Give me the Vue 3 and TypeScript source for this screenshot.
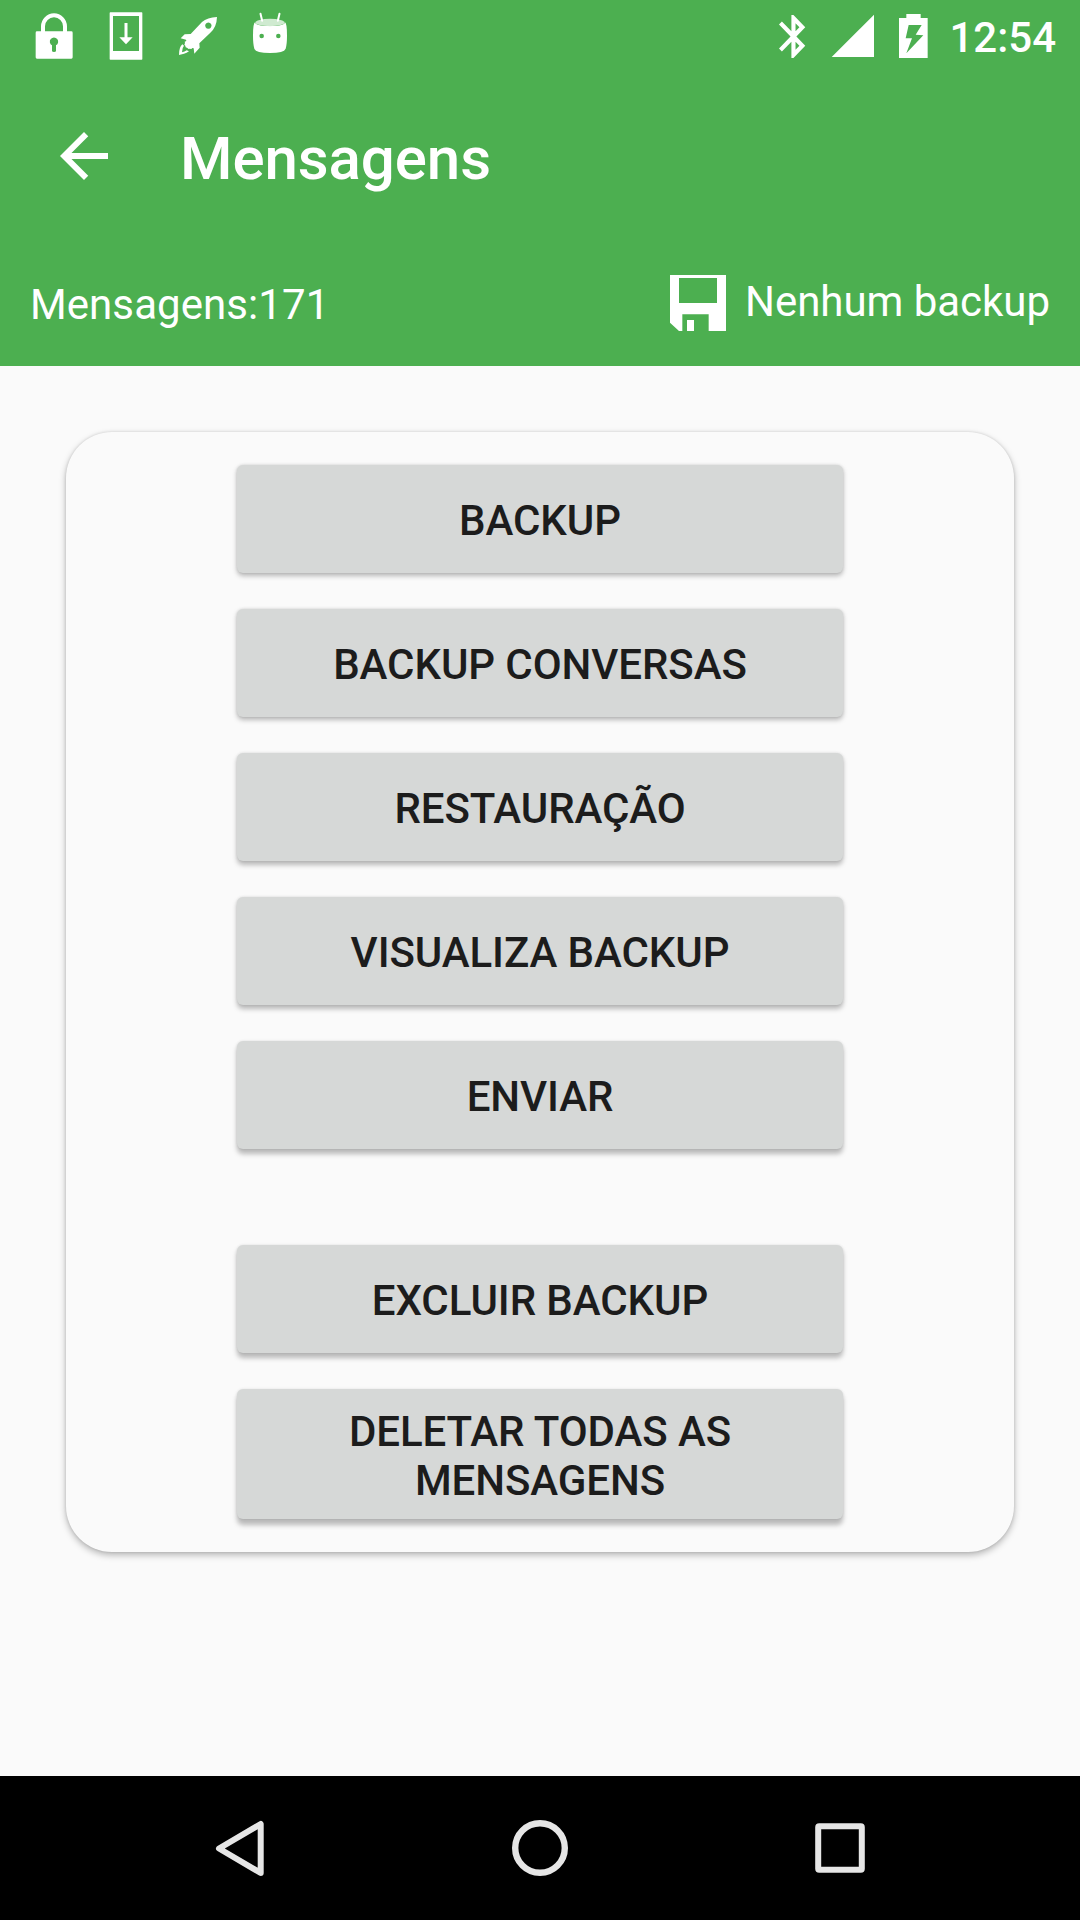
<script setup lang="ts">
interface Action {
  label: string
  tall?: boolean
  spaced?: boolean
}

const total = 171
const actions: Action[] = [
  { label: 'BACKUP' },
  { label: 'BACKUP CONVERSAS' },
  { label: 'RESTAURAÇÃO' },
  { label: 'VISUALIZA BACKUP' },
  { label: 'ENVIAR' },
  { label: 'EXCLUIR BACKUP', spaced: true },
  { label: 'DELETAR TODAS AS MENSAGENS', tall: true },
]

const shadowOffset = (index: number): string => `${2.5 + index * 0.45}px`
</script>

<template>
  <div class="screen">
    <header class="header">
      <div class="status">
        <div class="notifications">
          <svg width="38" height="72" viewBox="105 0 114 216">
            <path d="M129 98V79a33 33 0 0 1 66 0v19" fill="none" stroke="#fff" stroke-width="12" />
            <path fill="#fff" fill-rule="evenodd" d="M111 94h103q4 0 4 4v74q0 4-4 4H111q-4 0-4-4V98q0-4 4-4zM156 136v16q0 4 6 4t6-4v-16a12.500 12.500 0 1 0-12 0z" />
          </svg>
          <svg width="34" height="72" viewBox="327 0 102 216">
            <path fill="#fff" fill-rule="evenodd" d="M331 37h94q2 0 2 2v138q0 2-2 2h-94q-2 0-2-2V39q0-2 2-2zM339 48v105h78V48z" />
            <path fill="#fff" d="M373.500 69h9v43H398l-20 21-20-21h15.500z" />
          </svg>
          <svg width="40" height="72" viewBox="534 0 120 216">
            <path fill="#fff" fill-rule="evenodd" d="M651 51Q650 82 631 98L598 130l1 13-16 18-2-16-4-1-3 3-5-1-3 1-5-4-4-1-1-5-3-3 2-5-1-4 5-2-1-4-16-4 12-12 18-1 34-36Q622 52 651 51zM625 67.500a9.500 9.500 0 1 0 .1 0z" />
            <path fill="#fff" fill-rule="evenodd" d="M547 133l5 4q-6 6-6 20 8-2 14-6l7 3q-7 6-15 7l-15 4q0-24 10-32z" />
          </svg>
          <svg width="36" height="72" viewBox="756 0 108 216">
            <path fill="#fff" d="M765 67q0 11 45 11t45-11q6 3 6 40 0 25-4 39-5 13-47 13t-47-13q-4-14-4-39 0-37 6-40z" />
            <ellipse cx="810" cy="67.500" rx="44" ry="11" fill="#cfead0" />
            <path d="M781.500 41l5 21M838.500 41l-5 21" stroke="#fff" stroke-width="6" stroke-linecap="round" />
            <circle cx="785" cy="108" r="6.800" fill="#4caf50" />
            <circle cx="835" cy="108" r="6.800" fill="#4caf50" />
          </svg>
        </div>
        <div class="system">
          <svg width="28" height="72" viewBox="57 0 84 216">
            <path fill="#fff" transform="translate(26 32.100) scale(6.200 6.450)" d="M17.710 7.710L12 2h-1v7.590L6.410 5 5 6.410 10.590 12 5 17.590 6.410 19 11 14.410V22h1l5.710-5.710-4.300-4.290 4.300-4.290zM13 5.830l1.880 1.880L13 9.590V5.830zm1.880 10.460L13 18.170v-3.760l1.880 1.880z" />
          </svg>
          <svg width="43" height="72" viewBox="213 0 129 216">
            <path fill="#fff" d="M215 171H342V44z" />
          </svg>
          <svg class="battery" width="29" height="72" viewBox="417 0 87 216">
            <path fill="#fff" fill-rule="evenodd" d="M439 42h43v12h21v120h-86V54h22zM446 75l-9 40h19l-17 45 51-54-23-2 18-29z" />
          </svg>
          <span class="clock">12:54</span>
        </div>
      </div>

      <div class="toolbar">
        <svg width="72" height="72" viewBox="0 0 24 24">
          <path fill="#fff" d="M20 11H7.830l5.590-5.590L12 4l-8 8 8 8 1.410-1.410L7.830 13H20v-2z" />
        </svg>
        <h1 class="title">Mensagens</h1>
      </div>

      <div class="summary">
        <span class="count">Mensagens:{{ total }}</span>
        <div class="backup">
          <svg width="56" height="56" viewBox="90 75 168 168">
            <path fill="#fff" fill-rule="evenodd" d="M90 75H258V243H206V193H127V243H117L90 218zM117 84V159H231V84zM141 210h21v33h-21z" />
          </svg>
          <span class="backup-text">Nenhum backup</span>
        </div>
      </div>
    </header>

    <main class="content">
      <section class="card">
        <button
          v-for="(action, index) in actions"
          :key="action.label"
          type="button"
          class="action"
          :class="{ tall: action.tall, spaced: action.spaced }"
          :style="{ '--shadow-y': shadowOffset(index) }"
        >
          {{ action.label }}
        </button>
      </section>
    </main>

    <nav class="nav">
      <svg width="60" height="60" viewBox="0 0 60 60">
        <path d="M9 30.500L50.700 6v49z" fill="none" stroke="#e6e6e6" stroke-width="6" stroke-linejoin="round" />
      </svg>
      <svg width="60" height="60" viewBox="0 0 60 60">
        <circle cx="30" cy="30" r="24.800" fill="none" stroke="#e6e6e6" stroke-width="6.400" />
      </svg>
      <svg width="60" height="60" viewBox="0 0 60 60">
        <rect x="8.200" y="8.200" width="43.600" height="43.600" rx="1" fill="none" stroke="#e6e6e6" stroke-width="6" stroke-linejoin="round" />
      </svg>
    </nav>
  </div>
</template>

<style>
body {
  margin: 0;
  background: #fafafa;
}
</style>

<style scoped>
.screen {
  width: 1080px;
  height: 1920px;
  display: flex;
  flex-direction: column;
  overflow: hidden;
  background: #fafafa;
  font-family: Roboto, "Liberation Sans", sans-serif;
  font-size: 42px;
  line-height: 49px;
}

svg {
  display: block;
  flex: none;
}

.header {
  height: 366px;
  flex: none;
  background: #4caf50;
  color: #fff;
}

.status {
  height: 72px;
  display: flex;
  justify-content: space-between;
}

.notifications {
  display: flex;
  padding-left: 35px;
  gap: 36px;
}

.notifications svg:nth-child(3) {
  margin-left: -1px;
}

.notifications svg:nth-child(4) {
  margin-left: -2px;
}

.system {
  width: 301px;
  box-sizing: border-box;
  display: flex;
  padding-right: 24px;
}

.system svg + svg {
  margin-left: 24px;
}

.system svg.battery {
  margin-left: 25px;
}

.clock {
  margin-left: auto;
  padding-top: 13px;
  font-weight: 500;
}

.toolbar {
  height: 168px;
  display: flex;
  align-items: flex-start;
  padding: 48px 0 0 48px;
  box-sizing: border-box;
}

.title {
  margin: 4px 0 0 60px;
  font-size: 60px;
  line-height: 70px;
  font-weight: 500;
  letter-spacing: -0.08px;
}

.summary {
  display: flex;
  justify-content: space-between;
  padding: 35px 30px 0;
}

.count {
  margin-top: 5px;
  letter-spacing: 0.08px;
}

.backup {
  display: flex;
  gap: 19px;
}

.backup-text {
  margin-top: 2px;
  letter-spacing: -0.03px;
}

.content {
  flex: 1;
  padding: 66px 66px 0;
}

.card {
  height: 1120px;
  box-sizing: border-box;
  padding-top: 33px;
  display: flex;
  flex-direction: column;
  align-items: center;
  gap: 36px;
  border-radius: 46px;
  background: #fafafa;
  box-shadow: 0 3px 7px rgba(0, 0, 0, 0.28), 0 0 3px rgba(0, 0, 0, 0.12);
}

.action {
  width: 606px;
  height: 108px;
  flex: none;
  display: block;
  box-sizing: border-box;
  margin: 0;
  padding: 3px 90px 0;
  border: 0;
  border-radius: 6px;
  background: #d6d8d7;
  color: #1c1c1c;
  font: 500 42px/49px Roboto, "Liberation Sans", sans-serif;
  letter-spacing: -0.08px;
  text-align: center;
  box-shadow: 0 var(--shadow-y) 5px rgba(0, 0, 0, 0.26), 0 0 3px rgba(0, 0, 0, 0.1);
}

.action.spaced {
  margin-top: 60px;
}

.action.tall {
  height: 130px;
  padding-top: 4px;
}

.nav {
  height: 144px;
  flex: none;
  display: flex;
  align-items: center;
  justify-content: space-between;
  padding: 0 210px;
  box-sizing: border-box;
  background: #000;
}
</style>
